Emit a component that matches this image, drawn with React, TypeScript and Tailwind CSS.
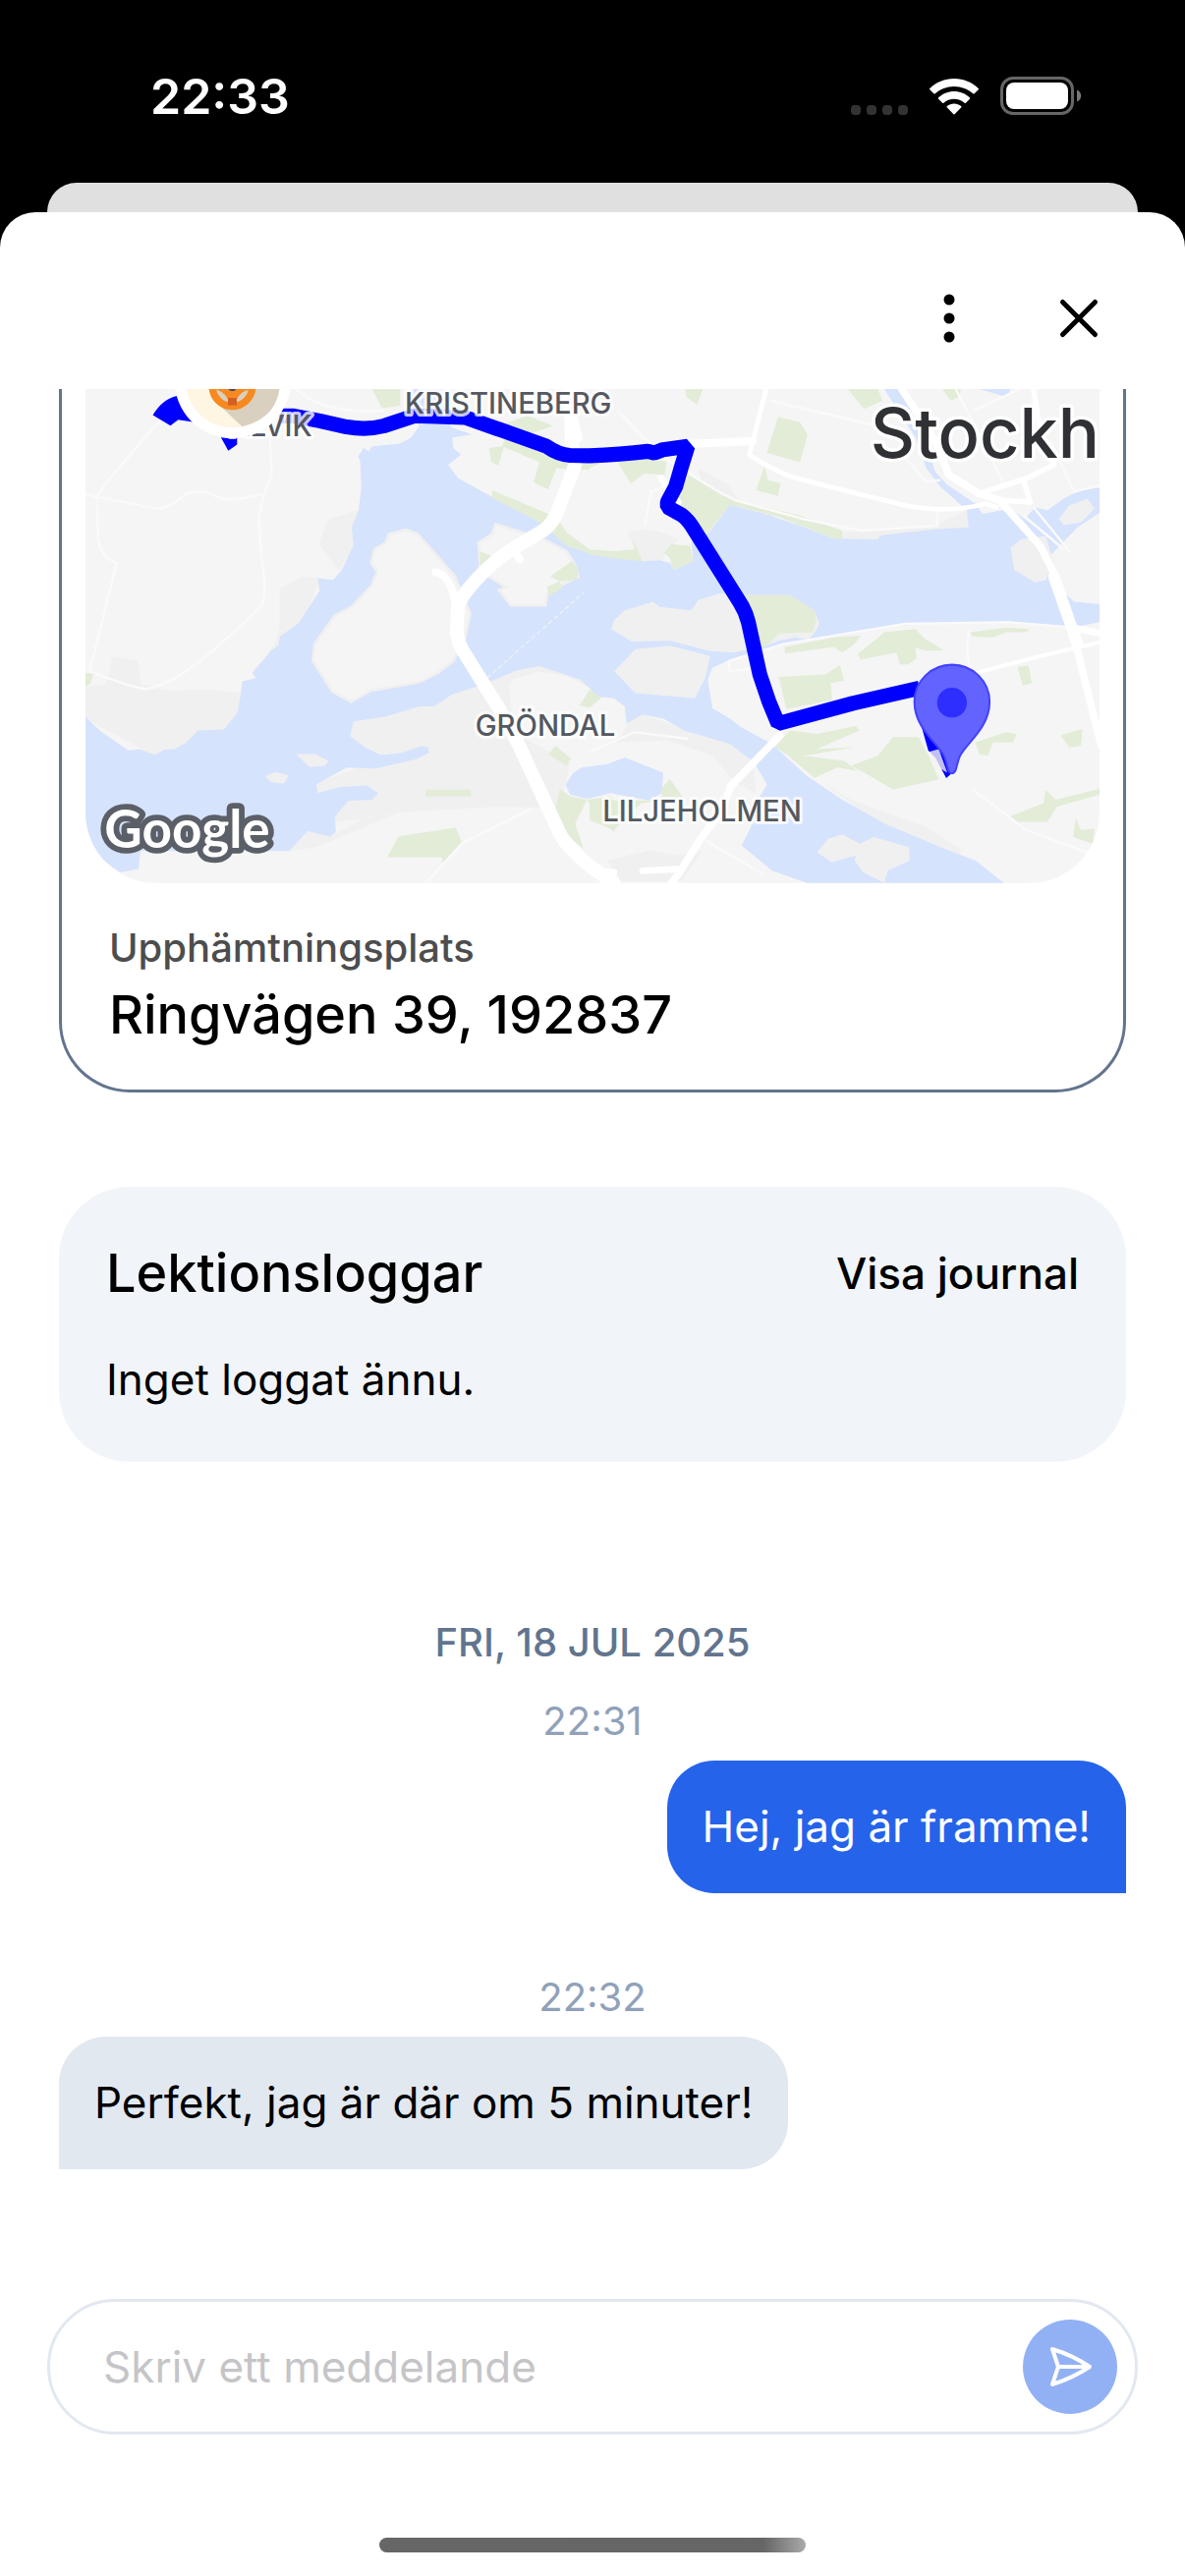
import { useState } from "react";

type Message = {
  id: number;
  time: string;
  text: string;
  mine: boolean;
};

const messages: Message[] = [
  { id: 1, time: "22:31", text: "Hej, jag är framme!", mine: true },
  {
    id: 2,
    time: "22:32",
    text: "Perfekt, jag är där om 5 minuter!",
    mine: false,
  },
];

const mapLabels = [
  { text: "ALVIK", x: 504, y: 186 },
  { text: "KRISTINEBERG", x: 1022, y: 120 },
  { text: "GRÖNDAL", x: 1230, y: 1072 },
  { text: "LILJEHOLMEN", x: 1606, y: 1325 },
];

function StatusBar() {
  return (
    <div className="flex items-center justify-between px-[105px] pt-[68px] pb-[58px] text-white">
      <span className="px-12 text-[50px] leading-[60px] font-semibold">
        22:33
      </span>

      <div className="flex items-center gap-[22px]">
        <svg width="58" height="40" viewBox="0 0 58 40" aria-hidden="true">
          {[0, 16, 32, 48].map((x) => (
            <rect key={x} x={x} y="29" width="10" height="10" rx="4" fill="#333" />
          ))}
        </svg>

        <svg width="50" height="40" viewBox="0 0 50 40" aria-hidden="true">
          <path
            fill="#fff"
            d="M25 2C15.400 2 6.700 5.800.3 12c-.4.400-.4 1 0 1.300l4 4c.4.400 1 .4 1.400 0C10.800 12.900 17.500 10 25 10s14.200 2.900 19.300 7.300c.4.400 1 .4 1.400 0l4-4c.4-.4.4-.9 0-1.300C43.300 5.800 34.600 2 25 2Z"
          />
          <path
            fill="#fff"
            d="M25 15c-6.100 0-11.700 2.400-15.900 6.300-.4.400-.4 1 0 1.400l4 4c.4.400 1 .4 1.300 0C17.300 24.300 21 22.700 25 22.700s7.700 1.600 10.600 4c.4.400.9.400 1.300 0l4-4c.4-.4.4-1 0-1.400C36.700 17.400 31.100 15 25 15Z"
          />
          <path
            fill="#fff"
            d="M25 27.500c-2.700 0-5.200 1-7.100 2.600-.5.400-.5 1 0 1.500l6.300 6.500c.4.500 1.200.5 1.600 0l6.300-6.500c.5-.5.5-1.100 0-1.500-1.900-1.600-4.400-2.600-7.100-2.600Z"
          />
        </svg>

        <svg width="83" height="40" viewBox="0 0 83 40" aria-hidden="true">
          <rect
            x="1.500"
            y="1.500"
            width="72"
            height="36"
            rx="11.500"
            fill="none"
            stroke="#666"
            strokeWidth="3"
          />
          <rect x="6" y="6" width="63" height="27" rx="8" fill="#fff" />
          <path d="M78 13.500c2.500.8 4.200 3.300 4.200 6s-1.700 5.200-4.200 6Z" fill="#777" />
        </svg>
      </div>
    </div>
  );
}

function RouteMap() {
  return (
    <svg
      viewBox="78 46 2997 1460"
      className="block h-auto w-full"
      role="img"
      aria-label="Karta"
    >
      <rect x="78" y="46" width="2997" height="1460" fill="#f5f5f5" />

      {/* darker land */}
      <g fill="#f0f0f0">
        <path d="M78 925 140 918 158 835 232 850 242 918 330 938 430 933 545 945 520 1060 283 1130 78 1020Z" />
        <path d="M885 402 795 432 768 502 826 584 875 510Z" />
        <path d="M770 605 715 600 652 638V740L642 790 575 890 620 840 720 740Z" />
        <path d="M1350 878 1240 915 1100 980 860 1030 850 1080 950 1140 750 1215 800 1330 1000 1298 1300 1280 1480 1285 1510 1150 1340 1060 1330 920Z" />
        <path d="M1568 930 1540 905 1420 862 1350 875 1335 905 1420 882 1500 895Z" />
        <path d="M680 1412 735 1352 800 1370 900 1315 1000 1300 760 1400Z" />
        <path d="M1700 1000 1850 1050 1990 1090 2050 1150 2060 1240 2000 1210 1930 1130 1800 1085 1650 1090Z" />
        <path d="M2240 1200 2340 1260 2560 1340 2665 1405 2660 1440 2439 1340Z" />
        <path d="M1620 1440 1740 1410 1830 1425 1900 1410 1840 1500H1660Z" />
        <path d="M1730 460 1780 470 1830 490 1800 520 1780 555 1720 555 1680 470Z" />
        <path d="M1890 280 1980 330 2010 380 1900 330Z" />
        <path d="M2290 470 2429 462 2590 450 2690 400 2688 458 2595 468 2418 495 2289 490Z" />
      </g>

      {/* water */}
      <g fill="#d6e3fd">
        <path d="M78 1015 120 1055 205 1115 240 1110 283 1128 312 1112 340 1110 375 1092 410 1055 487 1052 527 1003 537 950 541 910 582 900 570 885 628 818 648 805 652 778 708 738 770 642 764 605 810 610 835 582 870 507 865 455 885 405 893 340 890 260 884 245 900 220 915 230 925 215 1005 208 1040 190 1065 155 1040 120 1045 46H1120L1160 160 1220 180 1162 190 1165 220 1188 240 1150 270 1180 310 1280 365 1430 445 1500 480 1568 525 1724 555 1775 552 1806 560 1817 580 1874 555 1869 500 1920 470 1983 388 2087 415 2190 450 2289 488 2418 490 2429 478 2595 460 2688 455 2683 405 2667 390 2605 335 2563 280 2532 190 2480 110 2439 46H2500L2522 120 2563 200 2589 290 2626 330 2709 385 2729 415 2812 400 2854 430 2885 395 2921 405 2968 370 3020 345 3075 338V412L3010 455 2937 530 2926 545 2963 640 2999 675 3075 682V735L2999 750 2812 737 2595 740 2480 745 2346 770 2149 800 2066 820 1983 845 1931 870 1917 905 1931 990 1983 1020 2014 1045 2107 1095 2128 1115 2211 1190 2315 1260 2439 1330 2605 1400 2709 1440 2792 1506H2211L2107 1470 2017 1395 2045 1340 2066 1260 2092 1215 2055 1150 1983 1095 1848 1055 1786 1020 1724 1008 1677 1035 1672 985 1640 960 1589 955 1568 930 1540 905 1420 865 1350 878 1265 915 1160 950 1110 983 1065 985 960 1015 870 1028 860 1072 905 1105 950 1128 1010 1122 1070 1102 1092 1105 1092 1122 1055 1140 935 1168 850 1165 760 1215 765 1240 830 1222 910 1218 943 1240 925 1260 855 1263 815 1310 818 1355 800 1370 735 1352 680 1412H240L235 1465 180 1475 78 1400Z" />
        <path d="M1497 1215 1520 1180 1545 1165 1620 1155 1672 1135 1786 1180 1781 1240 1744 1262 1630 1240 1560 1258 1510 1245Z" />
        <path d="M2720 46 2800 70 2812 46Z" />
      </g>

      {/* islands */}
      <g fill="#f5f5f5" stroke="#f0f0f0" strokeWidth="8">
        <path d="M750 850 755 800 815 715 865 690 925 625 940 585 922 560 932 520 965 500 975 475 1025 462 1060 475 1100 520 1170 600 1190 650 1215 710 1200 780 1165 850 1120 885 1065 912 920 938 863 970 808 940Z" />
        <path d="M1290 445 1430 490 1500 525 1522 560 1535 600 1445 645 1437 685H1335L1300 640 1322 632 1245 585 1240 500 1280 475Z" />
      </g>
      <g fill="#f0f0f0">
        <path d="M1632 755 1640 730 1672 700 1755 675 1775 690 1869 700 1889 670 1952 650 2024 655 2159 655 2232 700 2247 740 2232 768 2128 790 2087 805 1993 825 1921 820 1807 790 1692 792Z" />
        <path d="M1641 880 1703 815 1807 805 1924 835 1910 900 1879 960 1703 945Z" />
        <path d="M2812 515 2843 490 2916 480 2940 560 2916 610 2885 618 2823 580Z" />
        <path d="M2955 430 2985 390 3040 370 3060 400 3020 440 2970 448Z" />
        <path d="M2240 1415 2273 1375 2315 1362 2367 1390 2408 1370 2512 1400 2514 1440 2449 1470 2439 1506 2377 1475 2351 1440 2355 1425 2284 1445Z" />
        <path d="M700 1125H755L797 1145 785 1160 740 1163Z" />
        <path d="M610 1190 640 1178 678 1188 665 1212 625 1208Z" />
        <path d="M2180 782 2195 768 2232 768 2215 785Z" />
      </g>

      {/* parks */}
      <g fill="#e2ecd7">
        <path d="M925 46H1008V95L955 103Z" />
        <path d="M1310 150 1385 125 1460 155 1400 175 1335 165Z" />
        <path d="M1320 185 1440 215 1510 250 1568 260V285L1470 280 1445 342 1402 322 1420 262 1310 215Z" />
        <path d="M1270 220 1315 215 1298 272 1278 262Z" />
        <path d="M1280 345 1470 425 1500 470 1568 520V532L1500 510 1460 475 1430 445 1280 368Z" />
        <path d="M1243 525 1290 545 1262 580 1243 582Z" />
        <path d="M1452 600 1515 555 1535 580 1530 610 1480 615ZM1443 630 1480 615 1487 635 1447 658Z" />
        <path d="M1568 280 1600 265 1650 262 1690 325 1730 295 1790 300 1795 260 1700 245 1568 265Z" />
        <path d="M1568 520 1640 525 1700 520 1695 490 1725 555 1650 548 1568 535Z" />
        <path d="M1788 530 1810 505 1865 510 1874 555 1815 580 1805 545Z" />
        <path d="M1825 380 1860 300 1960 360 2015 378 2190 420 2315 465V488H2289L2130 425 1983 388 1915 472 1850 420Z" />
        <path d="M1850 46H1903L1885 92 1855 70Z" />
        <path d="M2125 128 2190 145 2212 180 2190 262 2092 235Z" />
        <path d="M2085 275 2095 315 2132 325 2125 362 2060 345Z" />
        <path d="M2330 46H2420L2433 80 2380 105Z" />
        <path d="M2610 46H2665L2660 70 2635 80Z" />
        <path d="M2020 655H2159L2232 700 2238 730 2228 765 2130 768 2090 805 2060 800Z" />
        <path d="M2145 808 2290 780 2370 775 2350 800 2315 825 2290 808 2145 828Z" />
        <path d="M2360 830 2440 765 2530 755 2560 785 2615 818 2560 820 2530 810 2535 840 2510 860H2485L2475 825 2370 845Z" />
        <path d="M2127 897 2265 890 2308 862 2320 908 2280 915 2285 965 2150 992Z" />
        <path d="M2692 765 2800 752 2868 755 2860 765 2800 765 2760 780 2700 778Z" />
        <path d="M2833 868 2865 862 2875 915 2848 922Z" />
        <path d="M2115 1105 2160 1055 2240 1065 2355 1042 2365 1055 2240 1110 2350 1105 2200 1130 2320 1145 2360 1175 2300 1165 2232 1195 2150 1125Z" />
        <path d="M2340 1160 2420 1130 2465 1075 2540 1075 2570 1130 2600 1200 2465 1230 2380 1180Z" />
        <path d="M2708 1090 2800 1060 2830 1065 2820 1090 2760 1090 2745 1130 2720 1125Z" />
        <path d="M2960 1070 3025 1050 3020 1100 2985 1105Z" />
        <path d="M2810 1310 2910 1270 2915 1230 2945 1260 3075 1228V1245L2950 1280 2920 1325 2830 1325Z" />
        <path d="M3005 1315 3020 1350 3060 1345 3055 1390 2997 1370Z" />
        <path d="M1446 1125 1467 1100 1512 1138 1500 1160Z" />
        <path d="M1480 1228 1510 1250 1560 1260 1630 1250 1660 1300 1640 1355 1610 1330 1560 1260 1525 1330 1550 1405 1510 1370 1465 1300Z" />
        <path d="M1568 1262H1744L1782 1250 1778 1230 1805 1198 1845 1255 1720 1270 1640 1350 1568 1320Z" />
        <path d="M1568 935 1603 958 1568 988 1538 982Z" />
        <path d="M1083 1230H1217V1250H1083Z" />
        <path d="M970 1430 1003 1368 1172 1343 1193 1390 1135 1447 1130 1430Z" />
        <path d="M78 885 102 888 92 918 78 925Z" />
      </g>

      {/* minor roads */}
      <g fill="none" stroke="#fafafa" strokeWidth="7">
        <path d="M78 355 112 365 290 400Q330 395 360 368T440 352Q480 375 520 372L605 357 628 300 620 100" />
        <path d="M300 140 270 170 150 310 112 365 115 490Q125 545 170 560L90 880Q230 935 260 932C340 920 440 840 600 685Q615 640 600 560L590 430 605 357" />
        <path d="M700 46Q780 120 960 110" />
        <path d="M1090 1500 1190 1390 1400 1285" />
        <path d="M1650 110 1790 250 1950 350 2000 375 2200 430 2370 465 2595 450 2595 410" />
        <path d="M1980 880V850L2140 800 2500 740 2800 735 2990 750" />
        <path d="M1980 880 2060 870M2690 760Q2670 840 2715 930" />
        <path d="M2100 80 2440 160M2650 46 2790 320M2700 110 2840 46M2880 395 2990 530M2850 420 2970 520" />
        <path d="M2700 1230 2860 1350 3050 1420M1910 1380 2080 1480" />
        <path d="M1568 1120 1700 1060 1860 1080M1730 450 1750 350 1800 330" />
        <path d="M2480 220 2560 320 2605 315M2930 200 3000 350 3075 330" />
      </g>
      <path
        d="M1265 900 1550 648"
        stroke="#eef1f5"
        strokeWidth="4"
        strokeDasharray="14 8"
      />

      {/* main roads */}
      <g
        fill="none"
        stroke="#fff"
        strokeLinecap="round"
        strokeLinejoin="round"
      >
        <path
          strokeWidth="40"
          d="M1510 46 1515 200 1525 270 1480 390Q1465 440 1430 465L1330 525Q1270 565 1215 630 1175 680 1178 700L1175 765Q1180 800 1200 830L1300 990 1350 1080 1480 1360Q1500 1400 1580 1465L1640 1506"
        />
        <path strokeWidth="22" d="M1112 587Q1140 590 1160 635L1175 690" />
        <path strokeWidth="24" d="M1510 80 1535 190M1345 525 1362 550" />
        <path strokeWidth="22" d="M2130 1070 1985 1220 1960 1290 1900 1370 1830 1480 1810 1506" />
        <path strokeWidth="20" d="M1725 1470 1830 1465M1590 1470 1640 1475" />
        <path strokeWidth="24" d="M1860 208 2050 200" />
        <path
          strokeWidth="14"
          d="M2090 46 2040 240Q2130 300 2200 315L2460 380Q2600 420 2740 385L2770 395"
        />
        <path strokeWidth="22" d="M2490 46 2590 200 2630 300 2720 355 2780 375 2900 510 2940 590 2990 740 3030 900 3080 1100" />
        <path strokeWidth="16" d="M2720 355 2860 310 2940 270 2900 170 2880 46M2850 315 2870 380 2780 375" />
        <path strokeWidth="34" d="M2940 600 3010 800" />
        <path strokeWidth="12" d="M2710 885 2900 835 3075 795" />
        <path strokeWidth="20" d="M2990 750 3075 768" />
        <path strokeWidth="20" d="M1780 310 1830 380" />
      </g>

      {/* route */}
      <path
        d="M650 125H690L770 140 850 158Q910 168 960 155L1050 125 1200 130 1300 165 1440 215Q1475 240 1510 242L1568 243Q1660 240 1740 230L1760 235 1785 225 1858 215 1838 280 1822 335 1798 380V395L1840 418Q1860 432 1879 465L2014 680Q2030 705 2037 735L2071 890 2098 970 2125 1035 2346 975 2543 930"
        fill="none"
        stroke="#0000ff"
        strokeWidth="44"
        strokeLinejoin="bevel"
      />
      <path
        d="M277 123Q305 75 348 66L395 143 352 137 329 154ZM478 188 500 228 526 210V188ZM2545 1030 2569 1115 2590 1135 2622 1196 2640 1180 2620 1080Z"
        fill="#0000ff"
      />
      <path
        d="M2570 1118 2600 1110 2625 1180 2600 1165Z"
        fill="#f0f0f0"
        fillOpacity="0.8"
      />

      {/* place names */}
      <g
        paintOrder="stroke"
        strokeLinejoin="round"
        className="font-[Inter,sans-serif] font-medium"
      >
        <g fill="#54585f" stroke="#fff" strokeOpacity="0.8" strokeWidth="18" fontSize="85">
          {mapLabels.map((label) => (
            <text key={label.text} x={label.x} y={label.y}>
              {label.text}
            </text>
          ))}
        </g>
        <text
          x="2398"
          y="248"
          fontSize="204"
          fill="#2f3135"
          stroke="#fff"
          strokeWidth="20"
        >
          Stockh
        </text>
      </g>

      {/* driver marker */}
      <circle cx="513" cy="20" r="172" fill="#fff" />
      <circle cx="513" cy="20" r="140" fill="#fff5e3" />
      <path d="M470 90 541 157Q653 130 653 20L560 0Z" fill="#dad0bf" />
      <circle cx="512" cy="38" r="59" fill="#dad0bf" stroke="#f6891f" strokeWidth="21" />
      <path d="M455 30Q512 64 569 30V46Q540 50 526 74H498Q484 50 455 46Z" fill="#f6891f" />
      <path d="M499 72H525V94H499Z" fill="#d35f22" />
      <circle cx="512" cy="38" r="14" fill="#3c4561" />

      {/* pickup pin */}
      <path
        d="M2639 1182C2625 1182 2628 1160 2616 1132 2600 1095 2528 1050 2528 970A111 109 0 0 1 2750 970C2750 1050 2678 1095 2662 1132 2650 1160 2653 1182 2639 1182Z"
        fill="#6363ff"
        stroke="#4242ff"
        strokeWidth="6"
      />
      <circle cx="2639" cy="973" r="44" fill="#2e2eff" />

      <text
        x="134"
        y="1402"
        fontSize="154"
        fill="#fff"
        stroke="#5b5f68"
        strokeWidth="34"
        strokeLinejoin="round"
        paintOrder="stroke"
        className="font-[Lato,sans-serif] font-bold"
      >
        Google
      </text>
    </svg>
  );
}

function LocationCard() {
  return (
    <section className="rounded-b-[72px] border-3 border-t-0 border-slate-500 px-6">
      <div className="overflow-hidden rounded-b-[72px]">
        <RouteMap />
      </div>
      <div className="flex flex-col gap-2 px-6 pt-[42px] pb-10">
        <p className="text-[40px] leading-12 font-medium text-[#4d4d4d]">
          Upphämtningsplats
        </p>
        <p className="text-[54px] leading-[72px] font-medium">
          Ringvägen 39, 192837
        </p>
      </div>
    </section>
  );
}

function LessonLog() {
  return (
    <section className="mt-24 rounded-[72px] bg-slate-100 px-12 py-13">
      <div className="flex items-center justify-between">
        <h2 className="text-[54px] leading-[72px] font-medium">
          Lektionsloggar
        </h2>
        <button type="button" className="text-[44px] leading-16 font-medium">
          Visa journal
        </button>
      </div>
      <p className="mt-10 text-[44px] leading-16">Inget loggat ännu.</p>
    </section>
  );
}

function ChatMessage({ message }: { message: Message }) {
  return (
    <li className="flex flex-col gap-4">
      <time className="text-center text-[40px] leading-12 text-slate-400">
        {message.time}
      </time>
      <p
        className={
          message.mine
            ? "self-end rounded-[48px] rounded-br-none bg-[#2563eb] px-9 py-9 text-[44px] leading-[63px] text-white"
            : "self-start rounded-[48px] rounded-bl-none bg-slate-200 px-9 py-9 text-[44px] leading-[63px] text-black"
        }
      >
        {message.text}
      </p>
    </li>
  );
}

function MessageForm() {
  const [draft, setDraft] = useState("");

  const submitHandler = (e: React.FormEvent<HTMLFormElement>) => {
    e.preventDefault();
    if (!draft) return;
    setDraft("");
  };

  return (
    <form
      onSubmit={submitHandler}
      className="mx-12 flex items-center rounded-full border-3 border-slate-200 py-[18px] pr-[18px] pl-[54px]"
    >
      <input
        type="text"
        aria-label="Meddelande"
        placeholder="Skriv ett meddelande"
        className="min-w-0 flex-1 text-[44px] leading-16 outline-none placeholder:text-[#c5c5c7]"
        value={draft}
        onChange={(e) => setDraft(e.target.value)}
      />
      <button
        type="submit"
        aria-label="Skicka"
        className="size-24 rounded-full bg-[#92b1f5]"
      >
        <svg
          viewBox="0 0 96 96"
          className="size-24"
          fill="none"
          stroke="#fff"
          strokeWidth="4"
          strokeLinecap="round"
          strokeLinejoin="round"
        >
          <path d="M30 30C43 34 56 40 68 48 56 56 43 62 30 66L36 48ZM36 48H66" />
        </svg>
      </button>
    </form>
  );
}

export default function App() {
  return (
    <div className="flex min-h-screen flex-col bg-black font-[Inter,sans-serif] text-black">
      <StatusBar />
      <div className="mx-12 h-[30px] rounded-t-[30px] bg-[#e0e0e0]" />

      <div className="flex flex-1 flex-col rounded-t-[36px] bg-white">
        <header className="flex items-center justify-end gap-12 px-[66px] pt-[66px] pb-[30px]">
          <button type="button" aria-label="Fler val" className="p-1">
            <svg width="76" height="76" viewBox="0 0 76 76">
              <circle cx="38" cy="19" r="5.500" />
              <circle cx="38" cy="38" r="5.500" />
              <circle cx="38" cy="57" r="5.500" />
            </svg>
          </button>
          <button type="button" aria-label="Stäng" className="p-1">
            <svg
              width="76"
              height="76"
              viewBox="0 0 76 76"
              stroke="#000"
              strokeWidth="5"
              strokeLinecap="round"
            >
              <path d="M21.500 21.500 54.500 54.500M54.500 21.500 21.500 54.500" />
            </svg>
          </button>
        </header>

        <main className="flex-1 px-[60px]">
          <LocationCard />
          <LessonLog />

          <h3 className="mt-40 text-center text-[40px] leading-12 font-medium text-slate-500">
            FRI, 18 JUL 2025
          </h3>
          <ul className="mt-8 flex flex-col gap-[82px]">
            {messages.map((message) => (
              <ChatMessage key={message.id} message={message} />
            ))}
          </ul>
        </main>

        <footer className="pt-20 pb-6">
          <MessageForm />
          <div className="mx-auto mt-[105px] h-[15px] w-9/25 rounded-full bg-linear-to-r from-[#666] from-90% to-[#aaa]" />
        </footer>
      </div>
    </div>
  );
}
